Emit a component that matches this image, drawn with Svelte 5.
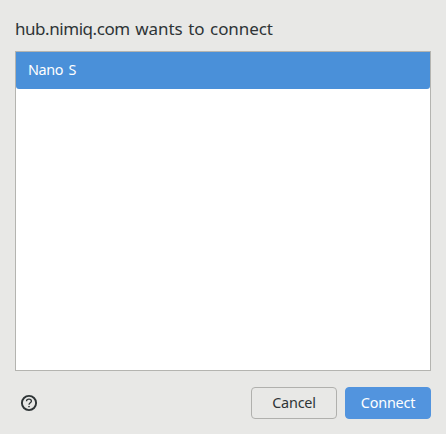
<script>
  let selected = $state(0);
  const devices = ['Nano S'];
</script>

<div class="dialog">
  <h1><span class="origin">hub.nimiq.com</span> <span class="message">wants to connect</span></h1>
  <div class="list" role="listbox">
    {#each devices as device, i}
      <button class="row" class:selected={selected === i} role="option" aria-selected={selected === i} onclick={() => (selected = i)}><span>{device}</span></button>
    {/each}
  </div>
  <footer>
    <button class="help" aria-label="Help">
      <svg width="18" height="18" viewBox="0 0 18 18" fill="none" stroke="#2e3436">
        <circle cx="9" cy="9" r="7.1" stroke-width="1.9" />
        <path d="M6.5 7.3C6.5 5.9 7.6 5.2 9 5.2S11.4 6 11.4 7.2C11.4 8.7 9 9 9 10.8" stroke-width="1.3" />
        <path d="M9 11.9v1.4" stroke-width="1.5" />
      </svg>
    </button>
    <button class="btn"><span class="cancel">Cancel</span></button>
    <button class="btn primary"><span class="connect">Connect</span></button>
  </footer>
</div>

<style>
  :global(body) { background: #e8e8e6; }
  .dialog {
    box-sizing: border-box;
    height: 434px;
    padding: 15px;
    display: flex;
    flex-direction: column;
    background: #e8e8e6;
    color: #2e3436;
    font-family: "Noto Sans", sans-serif;
  }
  h1 {
    margin: 0 0 8px;
    height: 28px;
    font-size: 17px;
    font-weight: 400;
    line-height: 28px;
    white-space: nowrap;
    word-spacing: 1.2px;
  }
  .origin { letter-spacing: -0.45px; }
  .message { letter-spacing: -0.07px; }
  .list {
    box-sizing: border-box;
    height: 320px;
    border: 1px solid #b4b4b0;
    background: #fff;
  }
  button {
    margin: 0;
    padding: 0;
    border: 0;
    background: none;
    color: inherit;
    font: inherit;
  }
  .row {
    display: block;
    width: 100%;
    height: 37px;
    padding: 0 0 1px 12px;
    font-size: 14.4px;
    line-height: 34px;
    text-align: left;
    letter-spacing: -0.35px;
    word-spacing: 1.8px;
  }
  .row.selected {
    background: #4a90d9;
    border-radius: 0 0 3px 3px;
    color: #fff;
  }
  footer {
    display: flex;
    align-items: center;
    gap: 8px;
    margin-top: 16px;
    height: 32px;
  }
  .help {
    width: 18px;
    height: 18px;
    margin: 0 auto 0 5px;
  }
  .help svg { display: block; }
  .btn {
    box-sizing: border-box;
    width: 86px;
    height: 32px;
    border: 1px solid #b0b0ad;
    border-radius: 4px;
    font-size: 14.4px;
    line-height: 30px;
    letter-spacing: -0.2px;
  }
  .primary {
    border-color: #5294de;
    background: #5294de;
    color: #fff;
  }
</style>
